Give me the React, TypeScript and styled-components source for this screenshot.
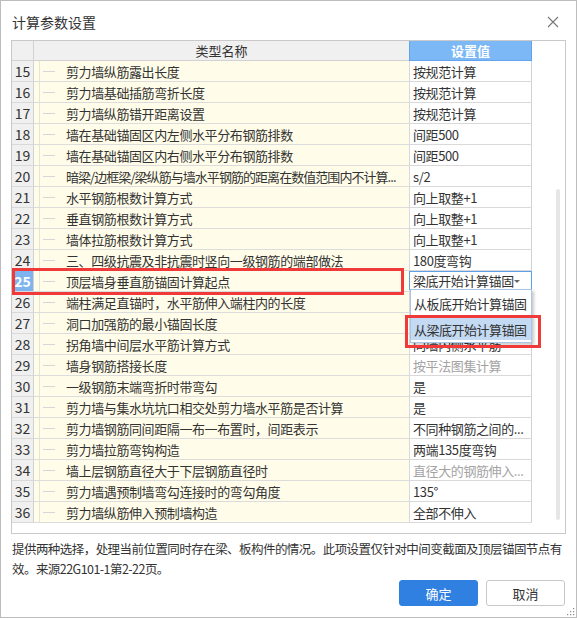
import React from "react";
import styled, { createGlobalStyle } from "styled-components";

type Param = {
  no: number;
  name: string;
  value: string;
  muted?: boolean;
  tight?: boolean;
};

// rows 26 and 27 sit under the open dropdown, their values are not visible
const params: Param[] = [
  { no: 15, name: "剪力墙纵筋露出长度", value: "按规范计算" },
  { no: 16, name: "剪力墙基础插筋弯折长度", value: "按规范计算" },
  { no: 17, name: "剪力墙纵筋错开距离设置", value: "按规范计算" },
  { no: 18, name: "墙在基础锚固区内左侧水平分布钢筋排数", value: "间距500" },
  { no: 19, name: "墙在基础锚固区内右侧水平分布钢筋排数", value: "间距500" },
  { no: 20, name: "暗梁/边框梁/梁纵筋与墙水平钢筋的距离在数值范围内不计算...", value: "s/2", tight: true },
  { no: 21, name: "水平钢筋根数计算方式", value: "向上取整+1" },
  { no: 22, name: "垂直钢筋根数计算方式", value: "向上取整+1" },
  { no: 23, name: "墙体拉筋根数计算方式", value: "向上取整+1" },
  { no: 24, name: "三、四级抗震及非抗震时竖向一级钢筋的端部做法", value: "180度弯钩" },
  { no: 25, name: "顶层墙身垂直筋锚固计算起点", value: "梁底开始计算锚固" },
  { no: 26, name: "端柱满足直锚时，水平筋伸入端柱内的长度", value: "" },
  { no: 27, name: "洞口加强筋的最小锚固长度", value: "" },
  { no: 28, name: "拐角墙中间层水平筋计算方式", value: "同墙内侧水平筋" },
  { no: 29, name: "墙身钢筋搭接长度", value: "按平法图集计算", muted: true },
  { no: 30, name: "一级钢筋末端弯折时带弯勾", value: "是" },
  { no: 31, name: "剪力墙与集水坑坑口相交处剪力墙水平筋是否计算", value: "是" },
  { no: 32, name: "剪力墙钢筋同间距隔一布一布置时，间距表示", value: "不同种钢筋之间的..." },
  { no: 33, name: "剪力墙拉筋弯钩构造", value: "两端135度弯钩" },
  { no: 34, name: "墙上层钢筋直径大于下层钢筋直径时", value: "直径大的钢筋伸入...", muted: true },
  { no: 35, name: "剪力墙遇预制墙弯勾连接时的弯勾角度", value: "135°" },
  { no: 36, name: "剪力墙纵筋伸入预制墙构造", value: "全部不伸入" },
];

const options = ["从板底开始计算锚固", "从梁底开始计算锚固"];
const activeNo = 25;
const pickedOption = "从梁底开始计算锚固";

const App: React.FC = () => {
  return (
    <>
      <GlobalStyle />
      <Dialog>
        <TitleBar>
          <Title>计算参数设置</Title>
          <CloseButton aria-label="关闭">
            <svg width="12" height="12" viewBox="0 0 12 12">
              <path d="M1 1L11 11M11 1L1 11" stroke="#777" strokeWidth="1.1" fill="none" />
            </svg>
          </CloseButton>
        </TitleBar>

        <TableBox>
          <HeaderRow>
            <HeadCell />
            <HeadCell>类型名称</HeadCell>
            <HeadCell $accent>设置值</HeadCell>
            <HeadBlank />
          </HeaderRow>
          <Body>
            {params.map((p) => {
              const active = p.no === activeNo;
              return (
                <Row key={p.no}>
                  <NumCell $active={active}>{p.no}</NumCell>
                  <NameCell $tight={p.tight}>{p.name}</NameCell>
                  <ValueCell $muted={p.muted}>
                    {active ? (
                      <>
                        <SelectBox>
                          <span>{p.value}</span>
                          <Caret />
                        </SelectBox>
                        <OptionList>
                          {options.map((o) => (
                            <OptionItem key={o} $selected={o === pickedOption}>
                              {o}
                            </OptionItem>
                          ))}
                        </OptionList>
                      </>
                    ) : (
                      p.value
                    )}
                  </ValueCell>
                  <BlankCell />
                  {active && <RowMark />}
                </Row>
              );
            })}
            <ScrollThumb />
          </Body>
        </TableBox>

        <Description>
          提供两种选择，处理当前位置同时存在梁、板构件的情况。此项设置仅针对中间变截面及顶层锚固节点有效。来源22G101-1第2-22页。
        </Description>

        <Footer>
          <Button $primary>确定</Button>
          <Button>取消</Button>
        </Footer>

        <Grip width="10" height="10" viewBox="0 0 10 10">
          {[
            [8, 2],
            [8, 5],
            [5, 5],
            [8, 8],
            [5, 8],
            [2, 8],
          ].map(([x, y]) => (
            <rect key={`${x}-${y}`} x={x} y={y} width="1.2" height="1.2" fill="#888" />
          ))}
        </Grip>
      </Dialog>
    </>
  );
};

export default App;

const GlobalStyle = createGlobalStyle`
  html, body {
    margin: 0;
    padding: 0;
    background: #ffffff;
  }
  body {
    font-family: "Noto Sans CJK SC", "Noto Sans", sans-serif;
    color: #333;
  }
  * {
    box-sizing: border-box;
  }
`;

const Dialog = styled.div`
  position: relative;
  width: 577px;
  height: 618px;
  border: 1px solid #bdbdbd;
  background: #fff;
  padding: 0 10px 11px 10px;
  display: flex;
  flex-direction: column;
`;

const TitleBar = styled.div`
  height: 39px;
  display: flex;
  align-items: center;
  justify-content: space-between;
  padding: 0 6px 0 1px;
`;

const Title = styled.div`
  font-size: 14px;
  color: #333;
  margin-top: 2px;
`;

const CloseButton = styled.div`
  width: 14px;
  height: 14px;
  display: flex;
  align-items: center;
  justify-content: center;
  margin-top: 2px;
`;

const TableBox = styled.div`
  flex: none;
  height: 494px;
  border: 1px solid #c9c9c9;
  display: flex;
  flex-direction: column;
  background: #fff;
  font-size: 13px;
  letter-spacing: -0.4px;
`;

const columns = "22px 376px 122px 1fr";

const HeaderRow = styled.div`
  display: grid;
  grid-template-columns: ${columns};
  height: 20px;
`;

const HeadCell = styled.div<{ $accent?: boolean }>`
  display: flex;
  align-items: center;
  justify-content: center;
  letter-spacing: 0;
  color: ${({ $accent }) => ($accent ? "#fff" : "#333")};
  font-weight: ${({ $accent }) => ($accent ? 700 : 400)};
  background: ${({ $accent }) => ($accent ? "#7cb8f6" : "#f0f0f0")};
  border-right: 1px solid ${({ $accent }) => ($accent ? "#62a3ec" : "#d2d2d2")};
  border-bottom: 1px solid ${({ $accent }) => ($accent ? "#62a3ec" : "#d2d2d2")};
  border-left: ${({ $accent }) => ($accent ? "1px solid #62a3ec" : "none")};
  margin-left: ${({ $accent }) => ($accent ? "-1px" : "0")};
`;

const HeadBlank = styled.div`
  background: #fff;
`;

const Body = styled.div`
  position: relative;
  flex: 1;
`;

const Row = styled.div`
  position: relative;
  display: grid;
  grid-template-columns: ${columns};
  height: 21px;
`;

const NumCell = styled.div<{ $active?: boolean }>`
  display: flex;
  align-items: center;
  justify-content: center;
  font-size: 14px;
  letter-spacing: 0;
  font-weight: ${({ $active }) => ($active ? 700 : 400)};
  color: ${({ $active }) => ($active ? "#fff" : "#333")};
  background: ${({ $active }) => ($active ? "#7db4f0" : "#f0f0f0")};
  border-right: 1px solid #d2d2d2;
  border-bottom: 1px solid #d9d9d9;
`;

const NameCell = styled.div<{ $tight?: boolean }>`
  position: relative;
  min-width: 0;
  display: flex;
  align-items: center;
  padding: 0 4px 0 32px;
  background: #fffde9;
  border-bottom: 1px solid #dcdcdc;
  color: #333;
  letter-spacing: ${({ $tight }) => ($tight ? "-0.95px" : "-0.4px")};
  white-space: nowrap;
  overflow: hidden;

  &::before {
    content: "";
    position: absolute;
    left: 5px;
    top: 0;
    bottom: 0;
    width: 1px;
    background: #e6e4d4;
  }

  &::after {
    content: "";
    position: absolute;
    left: 9px;
    top: 50%;
    width: 12px;
    height: 1px;
    background: #d6d6d6;
  }
`;

const ValueCell = styled.div<{ $muted?: boolean }>`
  position: relative;
  display: flex;
  align-items: center;
  padding-left: 3px;
  color: ${({ $muted }) => ($muted ? "#a3a3a3" : "#333")};
  background: #fff;
  border-right: 1px solid #d2d2d2;
  border-bottom: 1px solid #d9d9d9;
  border-left: 1px solid #d9d9d9;
  margin-left: -1px;
  white-space: nowrap;
`;

const BlankCell = styled.div`
  background: #fff;
`;

const SelectBox = styled.div`
  position: absolute;
  left: -1px;
  top: 0;
  right: -1px;
  height: 19px;
  display: flex;
  align-items: center;
  justify-content: space-between;
  padding: 0 12px 0 3px;
  border: 1px solid #5d9fe8;
  background: #fff;
  color: #333;
`;

const Caret = styled.span`
  width: 0;
  height: 0;
  border-left: 3px solid transparent;
  border-right: 3px solid transparent;
  border-top: 3px solid #666;
  margin-top: 1px;
`;

const OptionList = styled.div`
  position: absolute;
  z-index: 5;
  left: 0;
  top: 18px;
  width: 122px;
  padding: 1px 0 2px;
  background: #fff;
  border: 1px solid #a9c6e6;
  box-shadow: 2px 2px 3px rgba(0, 0, 0, 0.22);
`;

const OptionItem = styled.div<{ $selected?: boolean }>`
  position: relative;
  height: ${({ $selected }) => ($selected ? "22px" : "25px")};
  margin-top: ${({ $selected }) => ($selected ? "2px" : "0")};
  display: flex;
  align-items: center;
  padding-left: 3px;
  color: #333;
  letter-spacing: -0.5px;
  white-space: nowrap;
  background: ${({ $selected }) => ($selected ? "#c4daf2" : "#fff")};

  &::after {
    content: ${({ $selected }) => ($selected ? '""' : "none")};
    position: absolute;
    left: -6px;
    top: -3px;
    width: 130px;
    height: 27px;
    border: 3px solid #f03a3a;
  }
`;

const RowMark = styled.div`
  position: absolute;
  z-index: 4;
  left: 0;
  top: -3px;
  width: 392px;
  height: 27px;
  border: 3px solid #f03a3a;
  pointer-events: none;
`;

const ScrollThumb = styled.div`
  position: absolute;
  left: 544px;
  top: 128px;
  width: 4px;
  height: 331px;
  border-radius: 2px;
  background: #e6e6e6;
`;

const Description = styled.div`
  flex: none;
  height: 45px;
  padding: 5px 0 0 1px;
  font-size: 12.5px;
  line-height: 20px;
  letter-spacing: -0.55px;
  color: #333;
  overflow-wrap: anywhere;
`;

const Footer = styled.div`
  display: flex;
  justify-content: flex-end;
  gap: 8px;
  margin-top: 1px;
  padding-right: 1px;
`;

const Button = styled.div<{ $primary?: boolean }>`
  width: 79px;
  height: 26px;
  display: flex;
  align-items: center;
  justify-content: center;
  border-radius: 3px;
  font-size: 13px;
  color: ${({ $primary }) => ($primary ? "#fff" : "#333")};
  background: ${({ $primary }) => ($primary ? "#2f80e1" : "#fff")};
  border: 1px solid ${({ $primary }) => ($primary ? "#2f80e1" : "#c8c8c8")};
`;

const Grip = styled.svg`
  position: absolute;
  right: 1px;
  bottom: 1px;
`;
